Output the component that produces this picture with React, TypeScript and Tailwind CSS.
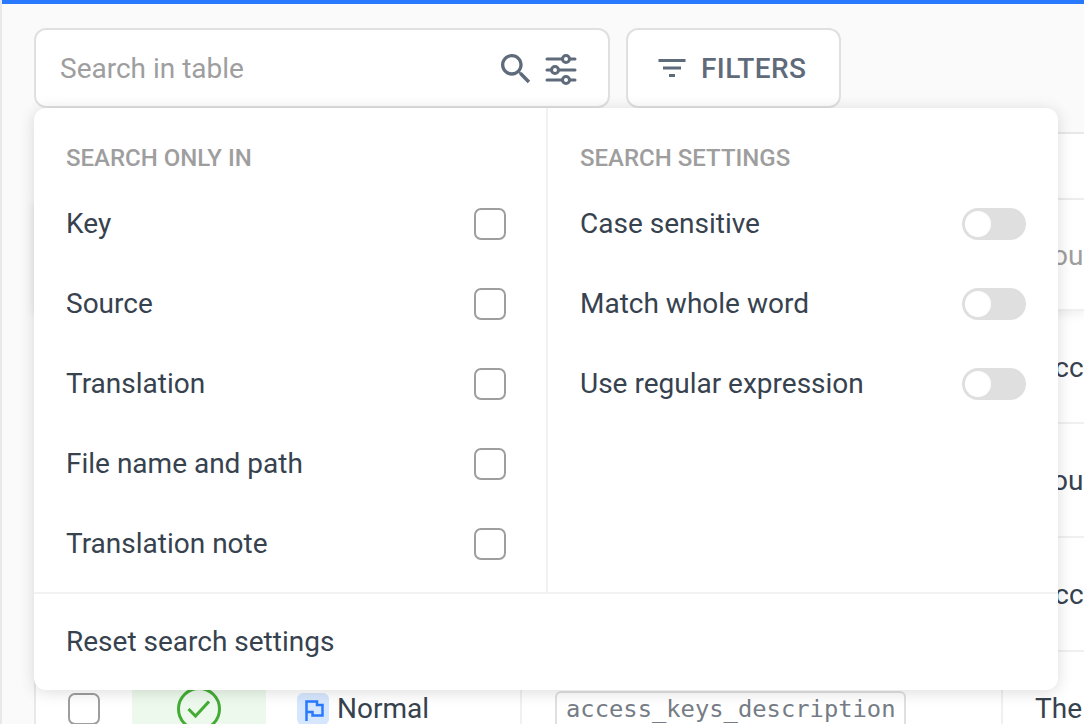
import React from "react";

function SearchIcon() {
  return (
    <svg width="40" height="40" viewBox="0 0 24 24" fill="#5f6b7a">
      <path d="M15.5 14h-.79l-.28-.27C15.41 12.59 16 11.11 16 9.5 16 5.91 13.09 3 9.5 3S3 5.91 3 9.5 5.91 16 9.5 16c1.61 0 3.09-.59 4.23-1.57l.27.28v.79l5 4.99L20.49 19l-4.99-5zm-6 0C7.01 14 5 11.99 5 9.5S7.01 5 9.5 5 14 7.01 14 9.5 11.99 14 9.5 14z" />
    </svg>
  );
}

function TuneIcon() {
  return (
    <svg width="32" height="32" viewBox="0 0 32 32" fill="none" stroke="#5f6b7a" strokeWidth="3" strokeLinecap="round">
      <path d="M2 6h15M25 6h5M2 17h4M14 17h16M2 27h15M25 27h5" />
      <circle cx="21" cy="6" r="3.5" />
      <circle cx="10" cy="17" r="3.5" />
      <circle cx="21" cy="27" r="3.5" />
    </svg>
  );
}

function FilterIcon() {
  return (
    <svg width="36" height="36" viewBox="0 0 24 24" fill="#5f6b7a">
      <path d="M10 18h4v-2h-4v2zM3 6v2h18V6H3zm3 7h12v-2H6v2z" />
    </svg>
  );
}

function Check({ label }: { label: string }) {
  return (
    <div className="h-20 flex items-center justify-between">
      <span className="text-[28px] text-[#37424f]">{label}</span>
      <span className="block w-8 h-8 border-2 border-[#9e9e9e] rounded-[7px] bg-white" />
    </div>
  );
}

function Toggle({ label }: { label: string }) {
  return (
    <div className="h-20 flex items-center justify-between">
      <span className="text-[28px] text-[#37424f]">{label}</span>
      <span className="flex items-center w-16 h-8 rounded-full bg-[#dfdfdf] pl-[3px]">
        <span className="block w-[26px] h-[26px] rounded-full bg-white" />
      </span>
    </div>
  );
}

function Row({ height, text, muted, raised }: { height: string; text: string; muted?: boolean; raised?: boolean }) {
  return (
    <div
      className={`${height} ${raised ? "relative shadow-[0_3px_10px_rgba(0,0,0,0.07)]" : ""} border-b-2 border-[#f0f0f0] bg-white flex items-center pl-[1002px]`}
    >
      <span className={`text-[28px] whitespace-nowrap pt-[2px] ${muted ? "text-[#9e9e9e]" : "text-[#37424f]"}`}>{text}</span>
    </div>
  );
}

export default function App() {
  return (
    <div className="relative h-[724px] w-full overflow-hidden bg-[#fafafa] font-['Roboto',sans-serif] border-l-2 border-[#e8e8e8]">
      <div className="h-1 -ml-[2px] bg-[#2979ff]" />

      <div className="flex gap-4 pl-8 pt-6 h-[128px]">
        <div className="w-[576px] h-20 rounded-xl border-2 border-[#e0e0e0] bg-white flex items-center pl-6 pr-[31px]">
          <span className="text-[28px] text-[#9e9e9e] flex-1 pt-[2px]">Search in table</span>
          <span className="flex items-center gap-[9px] pt-[1px]">
            <SearchIcon />
            <TuneIcon />
          </span>
        </div>
        <div className="w-[215px] h-20 rounded-xl border-2 border-[#e0e0e0] bg-white flex items-center pl-[26px] gap-[11px]">
          <FilterIcon />
          <span className="text-[28px] font-medium text-[#5f6b7a] tracking-[0.4px] pt-[2px]">FILTERS</span>
        </div>
      </div>

      <div className="ml-8 border-t-2 border-[#e8e8e8]">
        <Row height="h-[66px]" text="" />
        <Row height="h-[111px]" text="Your" muted raised />
        <Row height="h-[113px]" text="Access" />
        <Row height="h-[114px]" text="Your" />
        <Row height="h-[114px]" text="Access" />
        <div className="h-[74px] bg-white flex border-l-2 border-[#e8e8e8]">
          <div className="w-[96px] pl-8 pt-[41px]">
            <span className="block w-8 h-8 border-2 border-[#9e9e9e] rounded-[7px]" />
          </div>
          <div className="w-[134px] bg-[#edf9ec] flex justify-center pt-[35px]">
            <svg width="44" height="44" viewBox="0 0 44 44" fill="none" className="shrink-0">
              <circle cx="22" cy="22" r="20.500" stroke="#43ac35" strokeWidth="3" />
              <path d="M11.500 22l7 7L32 14.500" stroke="#43ac35" strokeWidth="3" />
            </svg>
          </div>
          <div className="w-[256px] border-r-2 border-[#f0f0f0] pl-[31px] pt-[41px] flex gap-2">
            <span className="block w-8 h-8 rounded-md bg-[#d6e6fd] shrink-0">
              <svg width="32" height="32" viewBox="0 0 32 32" fill="none" stroke="#2979ff" strokeWidth="2.500">
                <path d="M9.500 28V8.500h10.500v3.500h5.500v10.500H15.500V19H10" />
              </svg>
            </span>
            <span className="text-[28px] leading-8 text-[#37424f]">Normal</span>
          </div>
          <div className="w-[481px] border-r-2 border-[#f0f0f0] pl-[33px] pt-[39px]">
            <div className="w-[351px] h-[40px] border-2 border-[#e0e0e0] rounded-md flex items-start pl-[9px]">
              <span className="font-['DejaVu_Sans_Mono',monospace] text-[23.8px] leading-8 text-[#757c85] whitespace-nowrap">access_keys_description</span>
            </div>
          </div>
          <div className="pl-8 pt-[41px]">
            <span className="text-[28px] leading-8 text-[#37424f]">The</span>
          </div>
        </div>
      </div>

      <div className="absolute left-8 top-[108px] w-[1024px] h-[582px] bg-white rounded-xl shadow-[0_2px_16px_rgba(0,0,0,0.14)] flex flex-col">
        <div className="flex h-[486px] border-b-2 border-[#f2f2f2]">
          <div className="w-[514px] border-r-2 border-[#f2f2f2] pl-8 pr-10 pt-[36px]">
            <div className="h-[40px] text-[24px] font-medium leading-7 text-[#9e9e9e]">SEARCH ONLY IN</div>
            <Check label="Key" />
            <Check label="Source" />
            <Check label="Translation" />
            <Check label="File name and path" />
            <Check label="Translation note" />
          </div>
          <div className="flex-1 pl-8 pr-8 pt-[36px]">
            <div className="h-[40px] text-[24px] font-medium leading-7 text-[#9e9e9e]">SEARCH SETTINGS</div>
            <Toggle label="Case sensitive" />
            <Toggle label="Match whole word" />
            <Toggle label="Use regular expression" />
          </div>
        </div>
        <div className="flex-1 flex items-center pl-8">
          <span className="text-[28px] text-[#37424f]">Reset search settings</span>
        </div>
      </div>
    </div>
  );
}
